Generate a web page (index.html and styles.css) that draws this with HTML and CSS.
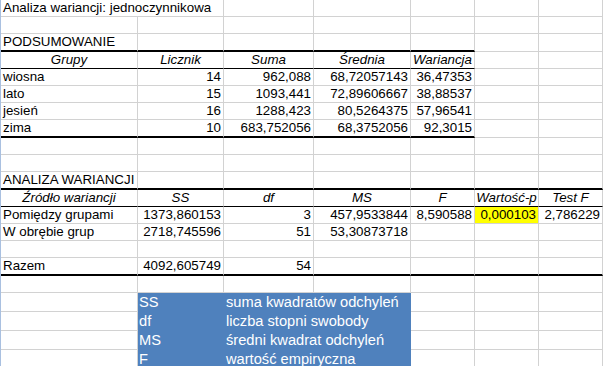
FILE: index.html
```html
<!DOCTYPE html>
<html lang="pl">
<head>
<meta charset="utf-8">
<title>Analiza wariancji</title>
<link rel="stylesheet" href="styles.css">
</head>
<body>
<div class="sheet">
  <!-- row 1 -->
  <div class="c t span2">Analiza wariancji: jednoczynnikowa</div>
  <div class="c"></div><div class="c"></div><div class="c"></div><div class="c"></div><div class="c"></div>
  <!-- row 2 -->
  <div class="c"></div><div class="c"></div><div class="c"></div><div class="c"></div><div class="c"></div><div class="c"></div><div class="c"></div>
  <!-- row 3 -->
  <div class="c t tk">PODSUMOWANIE</div>
  <div class="c tk"></div><div class="c tk"></div><div class="c tk"></div><div class="c tk"></div><div class="c"></div><div class="c"></div>
  <!-- row 4 -->
  <div class="c h hb">Grupy</div>
  <div class="c h hb">Licznik</div>
  <div class="c h hb">Suma</div>
  <div class="c h hb">Średnia</div>
  <div class="c h hb">Wariancja</div>
  <div class="c"></div><div class="c"></div>
  <!-- row 5 -->
  <div class="c t">wiosna</div>
  <div class="c n">14</div>
  <div class="c n">962,088</div>
  <div class="c n">68,72057143</div>
  <div class="c n">36,47353</div>
  <div class="c"></div><div class="c"></div>
  <!-- row 6 -->
  <div class="c t">lato</div>
  <div class="c n">15</div>
  <div class="c n">1093,441</div>
  <div class="c n">72,89606667</div>
  <div class="c n">38,88537</div>
  <div class="c"></div><div class="c"></div>
  <!-- row 7 -->
  <div class="c t">jesień</div>
  <div class="c n">16</div>
  <div class="c n">1288,423</div>
  <div class="c n">80,5264375</div>
  <div class="c n">57,96541</div>
  <div class="c"></div><div class="c"></div>
  <!-- row 8 -->
  <div class="c t tk">zima</div>
  <div class="c n tk">10</div>
  <div class="c n tk">683,752056</div>
  <div class="c n tk">68,3752056</div>
  <div class="c n tk">92,3015</div>
  <div class="c"></div><div class="c"></div>
  <!-- row 9 -->
  <div class="c"></div><div class="c"></div><div class="c"></div><div class="c"></div><div class="c"></div><div class="c"></div><div class="c"></div>
  <!-- row 10 -->
  <div class="c"></div><div class="c"></div><div class="c"></div><div class="c"></div><div class="c"></div><div class="c"></div><div class="c"></div>
  <!-- row 11 -->
  <div class="c t tk">ANALIZA WARIANCJI</div>
  <div class="c tk"></div><div class="c tk"></div><div class="c tk"></div><div class="c tk"></div><div class="c tk"></div><div class="c tk"></div>
  <!-- row 12 -->
  <div class="c h hb">Źródło wariancji</div>
  <div class="c h hb">SS</div>
  <div class="c h hb">df</div>
  <div class="c h hb">MS</div>
  <div class="c h hb">F</div>
  <div class="c h hb">Wartość-p</div>
  <div class="c h hb">Test F</div>
  <!-- row 13 -->
  <div class="c t">Pomiędzy grupami</div>
  <div class="c n">1373,860153</div>
  <div class="c n">3</div>
  <div class="c n">457,9533844</div>
  <div class="c n">8,590588</div>
  <div class="c n y">0,000103</div>
  <div class="c n">2,786229</div>
  <!-- row 14 -->
  <div class="c t">W obrębie grup</div>
  <div class="c n">2718,745596</div>
  <div class="c n">51</div>
  <div class="c n">53,30873718</div>
  <div class="c"></div><div class="c"></div><div class="c"></div>
  <!-- row 15 -->
  <div class="c"></div><div class="c"></div><div class="c"></div><div class="c"></div><div class="c"></div><div class="c"></div><div class="c"></div>
  <!-- row 16 -->
  <div class="c t tk">Razem</div>
  <div class="c n tk">4092,605749</div>
  <div class="c n tk">54</div>
  <div class="c tk"></div><div class="c tk"></div><div class="c tk"></div><div class="c tk"></div>
  <!-- row 17 -->
  <div class="c"></div><div class="c"></div><div class="c"></div><div class="c"></div><div class="c"></div><div class="c"></div><div class="c"></div>
  <!-- legend rows -->
  <div class="c"></div>
  <div class="c lg lk">SS</div>
  <div class="c lg lv span2">suma kwadratów odchyleń</div>
  <div class="c"></div><div class="c"></div><div class="c"></div>

  <div class="c"></div>
  <div class="c lg lk">df</div>
  <div class="c lg lv span2">liczba stopni swobody</div>
  <div class="c"></div><div class="c"></div><div class="c"></div>

  <div class="c"></div>
  <div class="c lg lk">MS</div>
  <div class="c lg lv span2">średni kwadrat odchyleń</div>
  <div class="c"></div><div class="c"></div><div class="c"></div>

  <div class="c"></div>
  <div class="c lg lk">F</div>
  <div class="c lg lv span2">wartość empiryczna</div>
  <div class="c"></div><div class="c"></div><div class="c"></div>
</div>
</body>
</html>
```

FILE: styles.css
```css
html, body {
  margin: 0;
  padding: 0;
  background: #ffffff;
  overflow: hidden;
}

body {
  font-family: "Liberation Sans", Arial, sans-serif;
  font-size: 13.33px;
  color: #000000;
}

.sheet {
  display: grid;
  grid-template-columns: 137px 86px 90px 97px 64px 64px 64px;
  grid-template-rows:
    17px 17px 18px 17px 17px 17px 17px 18px
    17px 17px 18px 17px 17px 17px 17px 18px
    17px 19px 19px 19px 19px;
  border-left: 1px solid #a9c0e0;
  width: 603px;
}

.c {
  box-sizing: border-box;
  border-right: 1px solid #d2d2d2;
  border-bottom: 1px solid #d2d2d2;
  white-space: nowrap;
  overflow: visible;
  line-height: 16px;
  min-width: 0;
}

.span2 {
  grid-column: span 2;
}

.t {
  padding-left: 2px;
  text-align: left;
}

.n {
  padding-right: 2px;
  text-align: right;
}

.h {
  font-style: italic;
  text-align: center;
}

.hb {
  border-bottom-color: #000000;
}

.tk {
  border-bottom: 2px solid #000000;
}

.y {
  background: #ffff00;
}

.lg {
  background: #4f81bd;
  border-color: #4f81bd;
  color: #ffffff;
  font-size: 14.67px;
  line-height: 18px;
}

.lk {
  padding-left: 1px;
}

.lv {
  padding-left: 2px;
}
```
